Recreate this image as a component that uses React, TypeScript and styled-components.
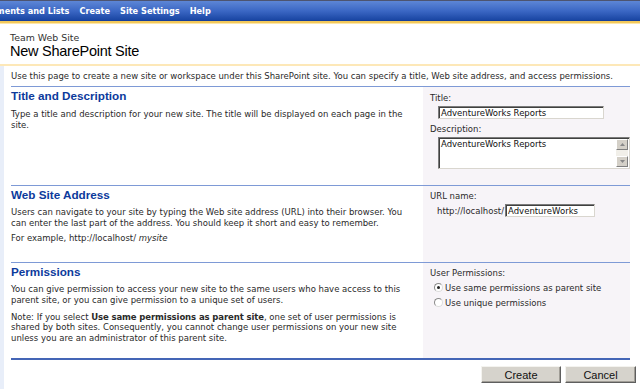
import React from "react";
import styled, { createGlobalStyle } from "styled-components";

const Global = createGlobalStyle`
  html, body { margin: 0; padding: 0; background: #fff; }
  body { font-family: "DejaVu Sans", Verdana, sans-serif; font-size: 8.5px; color: #2a2a2a; }
`;

const Page = styled.div`
  width: 640px;
  height: 389px;
  overflow: hidden;
  display: flex;
  flex-direction: column;
`;

const NavBar = styled.nav`
  height: 20px;
  border-top: 1px solid #4d5470;
  background: linear-gradient(#5d86d6 0%, #3b67c4 50%, #1a46a3 95%, #0e3691 100%);
  border-bottom: 2px solid #f2c85a;
  display: flex;
  align-items: center;
  gap: 10px;
  overflow: hidden;
`;

const NavItem = styled.span<{ $shift?: number }>`
  color: #fff;
  font-family: "DejaVu Sans", Verdana, sans-serif;
  font-weight: bold;
  font-size: 8.2px;
  white-space: nowrap;
  margin-left: ${(p) => p.$shift ?? 0}px;
`;

const Header = styled.header`
  height: 43px;
  padding: 8px 0 0 10px;
  box-sizing: border-box;
  border-top: 1px solid #fde6a8;
  border-bottom: 2px solid #fde8b8;
  display: flex;
  flex-direction: column;
`;

const SiteName = styled.div`
  font-family: "DejaVu Sans", Verdana, sans-serif;
  font-size: 9.4px;
  color: #333;
  line-height: 11px;
`;

const PageTitle = styled.h1`
  margin: 0;
  font-family: "Liberation Sans", Arial, sans-serif;
  font-weight: normal;
  font-size: 14.5px;
  letter-spacing: -0.25px;
  line-height: 16px;
  color: #000;
`;

const Body = styled.div`
  flex: 1;
  display: flex;
`;

const Strip = styled.div`
  width: 4px;
  background: #e8eef9;
`;

const Main = styled.main`
  flex: 1;
  display: flex;
  flex-direction: column;
  padding: 5px 0 0 7px;
`;

const Intro = styled.p`
  margin: 0 10px 0 0;
  line-height: 11px;
  height: 15px;
  white-space: nowrap;
`;

const Sections = styled.div`
  margin-right: 10px;
  border-bottom: 2px solid #4465b6;
`;

const Section = styled.section<{ $height: number }>`
  display: grid;
  grid-template-columns: 1fr 207px;
  height: ${(p) => p.$height}px;
  border-top: 1px solid #7e9ad6;
`;

const Left = styled.div`
  padding: 1px 12px 0 0;
`;

const Heading = styled.h2`
  margin: 0;
  font-family: "Liberation Sans", Arial, sans-serif;
  font-weight: bold;
  font-size: 11.7px;
  line-height: 15px;
  color: #0c3a9c;
`;

const Desc = styled.p<{ $gap?: number }>`
  margin: ${(p) => p.$gap ?? 5}px 0 0;
  line-height: 10.5px;
  color: #2a2a2a;
`;

const Em = styled.i`
  font-style: italic;
`;

const Strong = styled.b`
  font-weight: bold;
  letter-spacing: -0.1px;
`;

const Panel = styled.div`
  background: #f7f4f8;
  padding: 5px 0 0 7px;
  display: flex;
  flex-direction: column;
`;

const Label = styled.div<{ $top?: number }>`
  line-height: 11px;
  margin-top: ${(p) => p.$top ?? 0}px;
  color: #2a2a2a;
`;

const Field = styled.div<{ $w: number; $h: number }>`
  box-sizing: border-box;
  width: ${(p) => p.$w}px;
  height: ${(p) => p.$h}px;
  background: #fff;
  border-style: solid;
  border-width: 1px;
  border-color: #7b7b7b #d9d6cf #d9d6cf #7b7b7b;
  box-shadow: inset 1px 1px 0 #404040;
  padding: 1px 0 0 2px;
  line-height: 10px;
  color: #111;
  white-space: nowrap;
  overflow: hidden;
`;

const Indent = styled.div<{ $top: number; $left?: number }>`
  margin: ${(p) => p.$top}px 0 0 ${(p) => p.$left ?? 8}px;
  display: flex;
  align-items: center;
`;

const TextArea = styled(Field)`
  display: flex;
  justify-content: space-between;
  padding: 1px 1px 1px 2px;
`;

const ScrollBar = styled.div`
  width: 12px;
  display: flex;
  flex-direction: column;
  justify-content: space-between;
  background: #f1efe9;
`;

const ScrollBtn = styled.div`
  height: 11px;
  box-sizing: border-box;
  background: #d4d0c8;
  border-style: solid;
  border-width: 1px;
  border-color: #fff #808080 #808080 #fff;
  display: flex;
  align-items: center;
  justify-content: center;
`;

const Prefix = styled.span`
  margin-right: 1px;
  line-height: 10px;
`;

const RadioRow = styled.label`
  display: flex;
  align-items: center;
  gap: 2px;
  height: 13px;
  margin: 2px 0 0 4px;
  line-height: 10px;
`;

const Radio = styled.span<{ $on?: boolean }>`
  width: 9px;
  height: 9px;
  border-radius: 50%;
  box-sizing: border-box;
  border: 1px solid #8a8a8a;
  border-bottom-color: #dcdcdc;
  border-right-color: #dcdcdc;
  background: #fff;
  display: flex;
  align-items: center;
  justify-content: center;
  &::after {
    content: "";
    width: 3px;
    height: 3px;
    border-radius: 50%;
    background: ${(p) => (p.$on ? "#222" : "transparent")};
  }
`;

const Actions = styled.div`
  display: flex;
  justify-content: flex-end;
  gap: 4px;
  padding: 6px 4px 0 0;
`;

const Button = styled.button<{ $w: number }>`
  width: ${(p) => p.$w}px;
  height: 17px;
  box-sizing: border-box;
  background: #d6d3cc;
  border-style: solid;
  border-width: 1px;
  border-color: #f4f3ef #5e5e5e #5e5e5e #f4f3ef;
  box-shadow: inset -1px -1px 0 #a09d96;
  font-family: "Liberation Sans", Arial, sans-serif;
  font-size: 11px;
  color: #111;
  padding: 0;
  margin: 0;
`;

const Arrow = ({ up }: { up?: boolean }) => (
  <svg width="5" height="3" viewBox="0 0 5 3">
    <path d={up ? "M0 3 L2.5 0 L5 3 Z" : "M0 0 L2.5 3 L5 0 Z"} fill="#888" />
  </svg>
);

export default function App() {
  return (
    <Page>
      <Global />
      <NavBar>
        <NavItem $shift={-27}>Documents and Lists</NavItem>
        <NavItem>Create</NavItem>
        <NavItem>Site Settings</NavItem>
        <NavItem>Help</NavItem>
      </NavBar>
      <Header>
        <SiteName>Team Web Site</SiteName>
        <PageTitle>New SharePoint Site</PageTitle>
      </Header>
      <Body>
        <Strip />
        <Main>
          <Intro>
            Use this page to create a new site or workspace under this SharePoint site. You can specify a title, Web site address, and access permissions.
          </Intro>
          <Sections>
            <Section $height={98}>
              <Left>
                <Heading>Title and Description</Heading>
                <Desc $gap={6}>
                  Type a title and description for your new site. The title will be displayed on each page in the site.
                </Desc>
              </Left>
              <Panel>
                <Label $top={1}>Title:</Label>
                <Indent $top={2}>
                  <Field $w={166} $h={13}>AdventureWorks Reports</Field>
                </Indent>
                <Label $top={5}>Description:</Label>
                <Indent $top={2}>
                  <TextArea $w={192} $h={32}>
                    <span>AdventureWorks Reports</span>
                    <ScrollBar>
                      <ScrollBtn><Arrow up /></ScrollBtn>
                      <ScrollBtn><Arrow /></ScrollBtn>
                    </ScrollBar>
                  </TextArea>
                </Indent>
              </Panel>
            </Section>
            <Section $height={76}>
              <Left>
                <Heading>Web Site Address</Heading>
                <Desc>
                  Users can navigate to your site by typing the Web site address (URL) into their browser. You can enter the last part of the address. You should keep it short and easy to remember.
                </Desc>
                <Desc>
                  For example, http://localhost/ <Em>mysite</Em>
                </Desc>
              </Left>
              <Panel>
                <Label>URL name:</Label>
                <Indent $top={2} $left={7}>
                  <Prefix>http://localhost/</Prefix>
                  <Field $w={90} $h={13}>AdventureWorks</Field>
                </Indent>
              </Panel>
            </Section>
            <Section $height={95}>
              <Left>
                <Heading>Permissions</Heading>
                <Desc>
                  You can give permission to access your new site to the same users who have access to this parent site, or you can give permission to a unique set of users.
                </Desc>
                <Desc $gap={6.5}>
                  Note: If you select <Strong>Use same permissions as parent site</Strong>, one set of user permissions is shared by both sites. Consequently, you cannot change user permissions on your new site unless you are an administrator of this parent site.
                </Desc>
              </Left>
              <Panel>
                <Label>User Permissions:</Label>
                <RadioRow>
                  <Radio $on />
                  Use same permissions as parent site
                </RadioRow>
                <RadioRow>
                  <Radio />
                  Use unique permissions
                </RadioRow>
              </Panel>
            </Section>
          </Sections>
          <Actions>
            <Button $w={80}>Create</Button>
            <Button $w={71}>Cancel</Button>
          </Actions>
        </Main>
      </Body>
    </Page>
  );
}
